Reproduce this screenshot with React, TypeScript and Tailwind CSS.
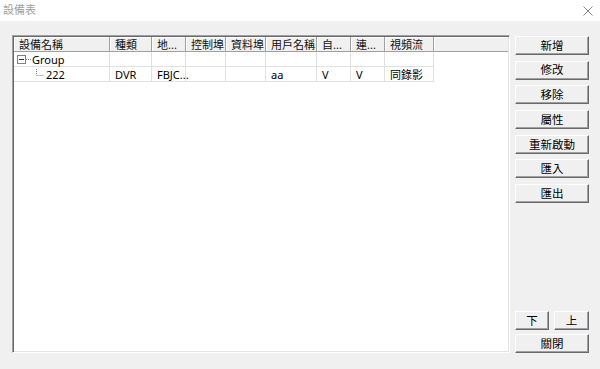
import React from "react"

interface Column {
  label: string
  width: number
}

const columns: Column[] = [
  { label: "設備名稱", width: 96 },
  { label: "種類", width: 42 },
  { label: "地...", width: 34 },
  { label: "控制埠", width: 40 },
  { label: "資料埠", width: 40 },
  { label: "用戶名稱", width: 51 },
  { label: "自...", width: 34 },
  { label: "連...", width: 34 },
  { label: "視頻流", width: 49 },
]

const deviceRow: string[] = ["222", "DVR", "FBJC...", "", "", "aa", "V", "V", "同錄影"]

const sideButtons: string[] = ["新增", "修改", "移除", "屬性", "重新啟動", "匯入", "匯出"]

const font = "font-['Noto_Sans','Noto_Sans_CJK_TC',sans-serif]"

const WinButton: React.FC<{ label: string; className?: string }> = ({ label, className = "" }) => (
  <button
    className={`h-[19px] flex items-center justify-center bg-[#f0f0f0] border border-t-white border-l-white border-r-[#696969] border-b-[#696969] shadow-[inset_-1px_-1px_0_#a0a0a0] text-[11.5px] leading-none text-black ${className}`}
  >
    {label}
  </button>
)

const TreeBox: React.FC = () => (
  <svg width="14" height="9" viewBox="0 0 14 9" className="shrink-0">
    <rect x="0.5" y="0.5" width="8" height="8" fill="white" stroke="#808080" />
    <line x1="2" y1="4.5" x2="7" y2="4.5" stroke="#333" />
    <line x1="9" y1="4.5" x2="14" y2="4.5" stroke="#808080" strokeDasharray="1 1" />
  </svg>
)

const TreeBranch: React.FC = () => (
  <svg width="10" height="10" viewBox="0 0 10 10" className="shrink-0">
    <line x1="1.5" y1="0" x2="1.5" y2="6" stroke="#808080" strokeDasharray="1 1" />
    <line x1="1.5" y1="6.5" x2="9" y2="6.5" stroke="#808080" strokeDasharray="1 1" />
  </svg>
)

export default function App() {
  return (
    <div className={`w-[600px] h-[369px] bg-[#f0f0f0] flex flex-col overflow-hidden ${font}`}>
      <div className="h-[21px] bg-white flex items-center justify-between pl-[3px] pr-[7px] shrink-0">
        <span className="text-[11px] text-[#a0a0a0] leading-none -mt-[2px]">設備表</span>
        <svg width="10" height="10" viewBox="0 0 10 10">
          <path d="M0.5 0.5 L9.5 9.5 M9.5 0.5 L0.5 9.5" stroke="#888" strokeWidth="1" />
        </svg>
      </div>

      <div className="flex pl-[12px] pt-[14px]">
        <div className="w-[498px] h-[318px] bg-white border border-t-[#a0a0a0] border-l-[#a0a0a0] border-r-white border-b-white shadow-[inset_1px_1px_0_#696969,inset_-1px_-1px_0_#e3e3e3] p-[1px] flex flex-col">
          <div className="flex h-[15px] shrink-0 bg-[#f0f0f0] border-b border-[#a0a0a0]">
            {columns.map((col) => (
              <div
                key={col.label}
                style={{ width: col.width }}
                className="shrink-0 h-full border-r border-[#a0a0a0] shadow-[inset_1px_1px_0_white] pl-[5px] flex items-center text-[11px] leading-none text-[#111] whitespace-nowrap"
              >
                {col.label}
              </div>
            ))}
            <div className="flex-1 h-full shadow-[inset_1px_1px_0_white]" />
          </div>

          <div className="flex h-[15px] shrink-0">
            <div className="w-[96px] shrink-0 border-r border-b border-[#e0e0e0] pl-[3px] flex items-center gap-[1px] text-[11px] leading-none">
              <TreeBox />
              <span>Group</span>
            </div>
            {columns.slice(1).map((col) => (
              <div key={col.label} style={{ width: col.width }} className="shrink-0 border-r border-b border-[#e0e0e0]" />
            ))}
          </div>

          <div className="flex h-[15px] shrink-0">
            {columns.map((col, i) => (
              <div
                key={col.label}
                style={{ width: col.width }}
                className={`shrink-0 border-r border-b border-[#e0e0e0] flex items-center text-[11px] leading-none whitespace-nowrap ${
                  i === 0 ? "pl-[21px]" : "pl-[5px]"
                }`}
              >
                {i === 0 && <TreeBranch />}
                <span className={i === 0 ? "ml-[1px]" : ""}>{deviceRow[i]}</span>
              </div>
            ))}
          </div>
        </div>

        <div className="ml-[5px] w-[74px] h-[318px] flex flex-col justify-between pt-[1px]">
          <div className="flex flex-col gap-[5.7px]">
            {sideButtons.map((label) => (
              <WinButton key={label} label={label} />
            ))}
          </div>
          <div className="flex flex-col gap-[4px]">
            <div className="flex justify-between">
              <WinButton label="下" className="w-[34px]" />
              <WinButton label="上" className="w-[35px]" />
            </div>
            <WinButton label="關閉" />
          </div>
        </div>
      </div>
    </div>
  )
}
